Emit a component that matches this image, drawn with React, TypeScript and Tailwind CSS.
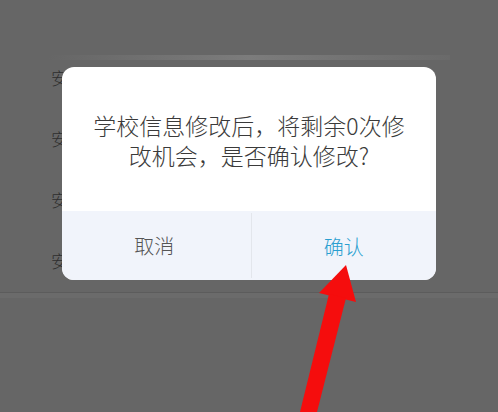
import React from 'react';

const rows = ['安', '安', '安', '安'];

export default function App() {
  return (
    <div
      className="relative h-[412px] w-[498px] overflow-hidden bg-[#666666]"
      style={{ fontFamily: '"Noto Sans CJK SC", "Noto Sans", sans-serif' }}
    >
      {/* page behind the mask */}
      <div className="pt-[55px]">
        <div className="mx-[48px] h-[5px] bg-gradient-to-r from-[#666666] via-[#7c7c7c] to-[#6a6a6a]" />
        <div className="mt-[-13px] flex flex-col pl-[51px]">
          {rows.map((r, i) => (
            <div key={i} className="flex h-[61px] items-center text-[17px] font-light text-[#2e2e2e]">
              {r}
            </div>
          ))}
        </div>
        <div className="mt-[1px] h-[6px] border-t border-[#5c5c5c] bg-[#6b6b6b]" />
      </div>

      {/* dialog */}
      <div className="absolute left-[62px] top-[67px] flex h-[213px] w-[374px] flex-col overflow-hidden rounded-[12px] bg-white">
        <div className="flex h-[144px] items-center justify-center pt-[2px]">
          <p className="text-center text-[23px] font-light leading-[30px] text-[#3a3a3a]">
            学校信息修改后，将剩余0次修
            <br />
            改机会，是否确认修改?
          </p>
        </div>
        <div className="flex flex-1 bg-[#f1f4fb]">
          <div className="flex flex-1 items-center justify-center pr-[4px] text-[20px] font-light text-[#555555]">
            取消
          </div>
          <div className="my-[2px] w-px bg-[#e3e6ec]" />
          <div className="flex flex-1 items-center justify-center pt-[3px] text-[20px] font-light text-[#2a9fd0]">
            确认
          </div>
        </div>
      </div>

      {/* red arrow */}
      <svg className="absolute left-0 top-0" width="498" height="412" viewBox="0 0 498 412">
        <polygon points="346,265 319,293 356,302" fill="#f50d0d" />
        <polygon points="329,294 346,298 317,412 300,412" fill="#f50d0d" />
      </svg>
    </div>
  );
}
